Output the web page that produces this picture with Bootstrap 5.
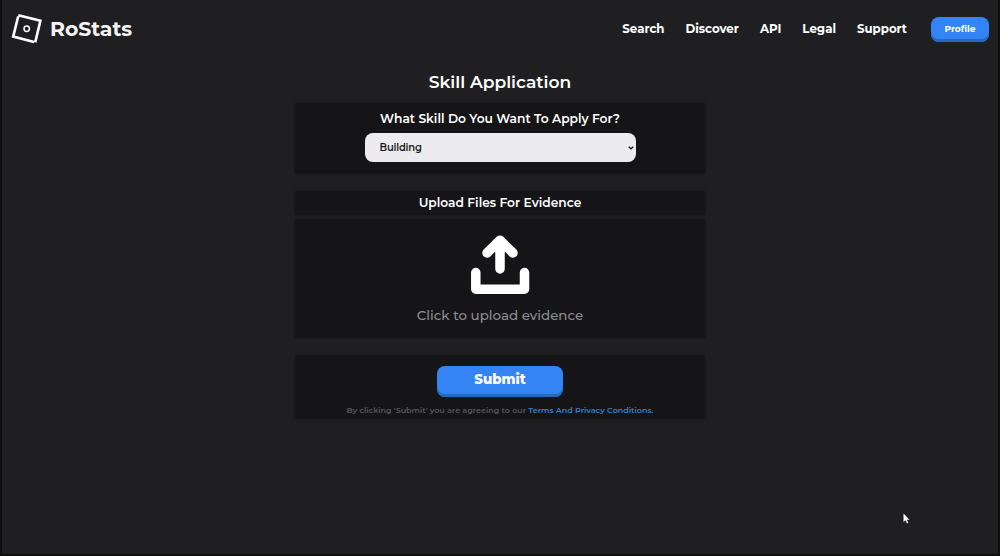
<!doctype html>
<html lang="en">
  <head>
    <meta charset="utf-8">
    <meta name="viewport" content="width=device-width, initial-scale=1">
    <title>RoStats - Skill Application</title>
    <link href="https://cdn.jsdelivr.net/npm/bootstrap@5.3.3/dist/css/bootstrap.min.css" rel="stylesheet">
    <style>
      body {
        height: 556px;
        overflow: hidden;
        color: #fff;
        background: #1f1f21;
        font-family: Montserrat, Inter, "Liberation Sans", sans-serif;
        border: 2px solid #101012;
        border-top: 0;
      }
      .site-header {
        height: 59px;
        padding: 0 9px;
      }
      .brand-logo {
        margin-bottom: 1px;
      }
      .brand-name {
        margin-left: 7px;
        font-size: 20.4px;
        font-weight: 700;
        color: #f4f4f5;
      }
      .site-menu {
        font-size: 11.8px;
        font-weight: 700;
        gap: 21px;
      }
      .btn-blue {
        color: #fff;
        background: #3584f6;
        box-shadow: inset 0 -3px #2569bf;
        border: 0;
        border-radius: 8px;
      }
      .btn-profile {
        width: 58px;
        height: 25px;
        padding: 0 0 2px;
        font-size: 9.1px;
        font-weight: 700;
        line-height: 1;
        margin-left: 24px;
      }
      .page-title {
        font-size: 17.1px;
        font-weight: 600;
        line-height: 24px;
        margin: 11px 0 9px;
      }
      .form-column {
        width: 410px;
      }
      .panel {
        background: #151517;
        border-radius: 2px;
        box-shadow: 0 0 2px #151517;
      }
      .panel-skill { height: 71px; margin-bottom: 17px; padding-top: 6px; }
      .panel-heading { height: 24px; margin-bottom: 4px; }
      .panel-upload { height: 119px; margin-bottom: 17px; padding-top: 14px; cursor: pointer; }
      .panel-submit { height: 64px; padding-top: 11px; }
      .panel-label {
        font-size: 12.25px;
        font-weight: 600;
        line-height: 20px;
      }
      .skill-select {
        width: 271px;
        height: 29px;
        margin-top: 4px;
        padding: 0 2px 0 15px;
        color: #1d1d20;
        background: #ececef;
        border-radius: 8px;
        font-size: 10px;
        font-weight: 600;
        letter-spacing: -.2px;
      }
      .upload-text {
        margin-top: 10px;
        font-size: 13.4px;
        font-weight: 500;
        line-height: 20px;
        color: #8e8e90;
      }
      .btn-submit {
        width: 126px;
        height: 31px;
        padding: 0 0 4px;
        font-size: 13.4px;
        font-weight: 800;
        line-height: 1;
      }
      .terms {
        margin-top: 8px;
        font-size: 8px;
        line-height: 11px;
        font-weight: 600;
        color: #555557;
      }
      .terms a {
        color: #2f83cf;
      }
      .pointer { left: 903px; top: 513px; }
    </style>
  </head>
  <body>
    <!-- Header -->
    <header class="site-header d-flex align-items-center">
      <a href="#" class="d-flex align-items-center text-white text-decoration-none">
        <svg class="brand-logo" width="32" height="32" viewBox="0 0 32 32" fill="none" stroke="#fff">
          <path d="M7.300 2.200 29.400 7.800 24.200 29.400M23 28.900 2.200 23.600 7.200 3.500" stroke-width="2.600"/>
          <circle cx="15.700" cy="15.700" r="2.700" stroke-width="1.500"/>
        </svg>
        <span class="brand-name">RoStats</span>
      </a>
      <nav class="site-menu d-flex ms-auto">
        <a href="#" class="text-white text-decoration-none">Search</a>
        <a href="#" class="text-white text-decoration-none">Discover</a>
        <a href="#" class="text-white text-decoration-none">API</a>
        <a href="#" class="text-white text-decoration-none">Legal</a>
        <a href="#" class="text-white text-decoration-none">Support</a>
      </nav>
      <button class="btn btn-blue btn-profile">Profile</button>
    </header>

    <!-- Application form -->
    <main class="form-column mx-auto text-center">
      <h1 class="page-title">Skill Application</h1>

      <div class="panel panel-skill d-flex flex-column align-items-center">
        <div class="panel-label">What Skill Do You Want To Apply For?</div>
        <div class="skill-select d-flex align-items-center justify-content-between" role="button">
          <span>Building</span>
          <svg width="6" height="4" viewBox="0 0 6 4" fill="none" stroke="#1d1d20" stroke-width="1.4"><path d="M.7.7 3 2.800 5.300.7"/></svg>
        </div>
      </div>

      <div class="panel panel-heading d-flex justify-content-center align-items-center">
        <div class="panel-label">Upload Files For Evidence</div>
      </div>

      <div class="panel panel-upload d-flex flex-column align-items-center">
        <svg width="60" height="62" viewBox="0 0 60 62" fill="none" stroke="#fff" stroke-width="9.500" stroke-linecap="round" stroke-linejoin="round">
          <path d="M30 8V36M17 20 30 7.200 43 20M5.800 39.500V56.200H54.500V39.500"/>
        </svg>
        <div class="upload-text">Click to upload evidence</div>
      </div>

      <div class="panel panel-submit d-flex flex-column align-items-center">
        <button class="btn btn-blue btn-submit">Submit</button>
        <div class="terms">By clicking 'Submit' you are agreeing to our <a href="#" class="text-decoration-none">Terms And Privacy Conditions.</a></div>
      </div>
    </main>

    <!-- Mouse pointer -->
    <svg class="pointer position-absolute" width="7" height="11" viewBox="0 0 7 11"><path d="M.5.500V9L2.500 7.200 4 10.400 5.200 9.800 3.900 6.800H6.500Z" fill="#fff"/></svg>
    <script src="https://cdn.jsdelivr.net/npm/bootstrap@5.3.3/dist/js/bootstrap.bundle.min.js"></script>
  </body>
</html>
